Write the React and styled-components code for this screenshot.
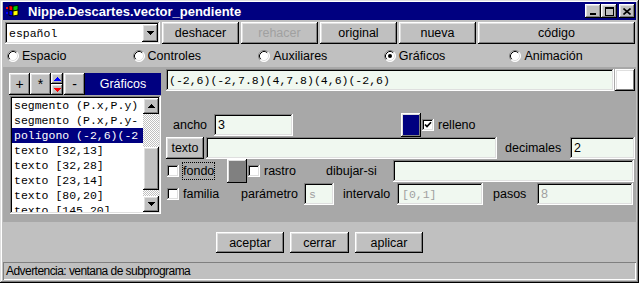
import React from 'react';
import styled, { createGlobalStyle, css } from 'styled-components';

const GlobalStyle = createGlobalStyle`
  html, body { margin: 0; padding: 0; background: #c0c0c0; }
  body { font-family: "Liberation Sans", Arial, sans-serif; font-size: 12.5px; color: #000; }
  * { box-sizing: border-box; }
`;

const raised = css`
  box-shadow: inset -1px -1px #000, inset 1px 1px #fff, inset -2px -2px #808080, inset 2px 2px #dfdfdf;
`;
const sunken = css`
  box-shadow: inset -1px -1px #fff, inset 1px 1px #808080, inset -2px -2px #dfdfdf, inset 2px 2px #000;
`;
const mono = `"Liberation Mono", "Courier New", monospace`;

const Window = styled.div`
  width: 639px;
  height: 283px;
  background: #c0c0c0;
  box-shadow: inset -1px -1px #000, inset 1px 1px #dfdfdf, inset -2px -2px #808080, inset 2px 2px #fff;
  padding: 2px 3px 3px 3px;
  display: flex;
  flex-direction: column;
  overflow: hidden;
`;

const TitleBar = styled.div`
  height: 18px;
  background: #000080;
  display: flex;
  align-items: center;
  padding: 0 1px 0 2px;
`;
const TitleText = styled.span`
  margin-left: 7px;
  color: #fff;
  font-weight: bold;
  font-size: 13px;
  white-space: nowrap;
`;
const TitleButtons = styled.div`
  margin-left: auto;
  display: flex;
  align-items: center;
`;
const TitleButton = styled.div`
  width: 16px;
  height: 14px;
  background: #c0c0c0;
  ${raised};
  display: flex;
  align-items: center;
  justify-content: center;
  margin-left: ${p => p.$gap || 0}px;
`;

const Toolbar = styled.div`
  margin-top: 2px;
  height: 22px;
  display: flex;
  gap: 2px;
  padding: 0 1px 0 2px;
`;
const Combo = styled.div`
  width: 155px;
  background: #fff;
  ${sunken};
  padding: 2px;
  display: flex;
  align-items: center;
`;
const ComboText = styled.span`
  flex: 1;
  padding-left: 2px;
  font-family: ${mono};
  font-size: 11.5px;
`;
const ComboArrow = styled.div`
  width: 16px;
  height: 100%;
  background: #c0c0c0;
  ${raised};
  display: flex;
  align-items: center;
  justify-content: center;
`;
const ToolButton = styled.div`
  ${p => (p.$w ? `width: ${p.$w}px;` : 'flex: 1;')}
  background: #c0c0c0;
  ${raised};
  display: flex;
  align-items: center;
  justify-content: center;
  color: ${p => (p.$disabled ? '#a0a0a0' : '#000')};
`;

const RadioRow = styled.div`
  height: 23px;
  display: grid;
  grid-template-columns: repeat(5, 1fr);
  align-items: center;
  padding: 0 1px 0 4px;
`;
const RadioItem = styled.label`
  display: flex;
  align-items: center;
  gap: 3px;
  white-space: nowrap;
`;

const MainPanel = styled.div`
  height: 155px;
  background: #a8a8a8;
  display: flex;
  align-items: flex-start;
`;
const LeftPanel = styled.div`
  margin-left: 6px;
  width: 152px;
  padding-top: 6px;
  display: flex;
  flex-direction: column;
`;
const ListToolbar = styled.div`
  height: 22px;
  display: flex;
`;
const SmallButton = styled.div`
  width: 21px;
  margin-left: ${p => p.$ml || 0}px;
  background: #c0c0c0;
  ${raised};
  display: flex;
  align-items: center;
  justify-content: center;
  font-size: 14px;
`;
const ArrowStack = styled.div`
  width: 12px;
  display: flex;
  flex-direction: column;
`;
const ArrowHalf = styled.div`
  flex: 1;
  background: #c0c0c0;
  ${raised};
  display: flex;
  align-items: center;
  justify-content: center;
`;
const PanelTitle = styled.div`
  flex: 1;
  background: #000080;
  color: #fff;
  display: flex;
  align-items: center;
  justify-content: center;
`;
const ListBox = styled.div`
  margin: 1px 0 0 1px;
  width: 151px;
  height: 118px;
  background: #fff;
  ${sunken};
  padding: 2px;
  display: flex;
`;
const ListItems = styled.div`
  flex: 1;
  overflow: hidden;
`;
const ListItem = styled.div`
  height: 15px;
  line-height: 15px;
  padding-left: 2px;
  font-family: ${mono};
  font-size: 11.5px;
  white-space: nowrap;
  overflow: hidden;
  background: ${p => (p.$selected ? '#000080' : 'transparent')};
  color: ${p => (p.$selected ? '#fff' : '#000')};
`;
const ScrollBar = styled.div`
  width: 16px;
  display: flex;
  flex-direction: column;
`;
const ScrollButton = styled.div`
  height: 16px;
  background: #c0c0c0;
  ${raised};
  display: flex;
  align-items: center;
  justify-content: center;
`;
const ScrollTrack = styled.div`
  flex: 1;
  padding-top: 33px;
  background: repeating-conic-gradient(#c0c0c0 0 25%, #fff 0 50%) 0 0 / 2px 2px;
`;
const ScrollThumb = styled.div`
  height: 43px;
  background: #c0c0c0;
  ${raised};
`;

const RightPanel = styled.div`
  margin-left: 5px;
  width: 469px;
  padding-top: 2px;
  display: flex;
  flex-direction: column;
`;
const PointsRow = styled.div`
  height: 22px;
  display: flex;
  gap: 1px;
`;
const PointsField = styled.div`
  width: 448px;
  background: #f0f8f0;
  ${sunken};
  display: flex;
  align-items: center;
  padding-left: 3px;
  font-family: ${mono};
  font-size: 11.5px;
  white-space: nowrap;
`;
const ColorButton = styled.div`
  width: ${p => p.$w}px;
  height: ${p => p.$h}px;
  margin-left: ${p => p.$ml || 0}px;
  background: ${p => p.$color};
  ${raised};
  flex: none;
`;
const FieldRow = styled.div`
  height: ${p => p.$h}px;
  margin-top: ${p => p.$mt || 0}px;
  display: flex;
  align-items: center;
`;
const Label = styled.span`
  width: ${p => (p.$w ? `${p.$w}px` : 'auto')};
  margin-left: ${p => p.$ml || 0}px;
  white-space: nowrap;
  flex: none;
`;
const FocusLabel = styled.span`
  width: ${p => p.$w}px;
  height: 18px;
  margin-left: ${p => p.$ml || 0}px;
  border: 1px dotted #000;
  display: flex;
  align-items: center;
  padding-left: 0;
  flex: none;
`;
const TextField = styled.div`
  width: ${p => p.$w}px;
  height: 22px;
  margin-left: ${p => p.$ml || 0}px;
  background: #f0f8f0;
  ${sunken};
  display: flex;
  align-items: center;
  padding-left: ${p => (p.$mono ? 5 : 4)}px;
  flex: none;
  font-family: ${p => (p.$mono ? mono : 'inherit')};
  font-size: ${p => (p.$mono ? '11.5px' : 'inherit')};
  color: ${p => (p.$disabled ? '#a0a0a0' : '#000')};
  white-space: nowrap;
`;
const CheckBoxBox = styled.div`
  width: 12px;
  height: 12px;
  margin-left: ${p => p.$ml || 0}px;
  background: #fff;
  ${sunken};
  display: flex;
  align-items: center;
  justify-content: center;
  flex: none;
`;
const PushButton = styled.div`
  width: ${p => p.$w}px;
  height: 22px;
  background: #c0c0c0;
  ${raised};
  display: flex;
  align-items: center;
  justify-content: center;
  flex: none;
`;

const ButtonBar = styled.div`
  height: 36px;
  padding-top: 10px;
  display: flex;
  justify-content: center;
  align-items: flex-start;
  gap: 6px;
`;
const DialogButton = styled.div`
  width: ${p => p.$w}px;
  height: 21px;
  background: #c0c0c0;
  ${raised};
  display: flex;
  align-items: center;
  justify-content: center;
`;
const StatusBar = styled.div`
  margin-top: 4px;
  height: 18px;
  box-shadow: inset 1px 1px #808080, inset -1px -1px #fff;
  display: flex;
  align-items: center;
  padding-left: 3px;
  font-size: 12px;
  letter-spacing: -0.55px;
  white-space: nowrap;
`;

const Tri = ({ dir = 'down', color = '#000', w = 7, h = 4 }) => (
  <svg width={w} height={h} viewBox={`0 0 ${w} ${h}`} shapeRendering="crispEdges">
    <polygon
      points={dir === 'down' ? `0,0 ${w},0 ${w / 2},${h}` : `0,${h} ${w},${h} ${w / 2},0`}
      fill={color}
    />
  </svg>
);

const AppIcon = () => (
  <svg width="16" height="16" viewBox="0 0 16 16">
    <rect x="1" y="4" width="2" height="2" fill="#f00" />
    <rect x="1" y="9" width="2" height="2" fill="#00f" />
    <path d="M4 2.5 L8 3.2 L8 8 L4 7.3 Z" fill="#f00" stroke="#000" strokeWidth="0.9" />
    <path d="M8 3.2 L13 2.3 L13 7.1 L8 8 Z" fill="#0c0" stroke="#000" strokeWidth="0.9" />
    <path d="M4 7.3 L8 8 L8 13 L4 12.3 Z" fill="#00f" stroke="#000" strokeWidth="0.9" />
    <path d="M8 8 L13 7.1 L13 12.1 L8 13 Z" fill="#ff0" stroke="#000" strokeWidth="0.9" />
  </svg>
);

const MinGlyph = () => (
  <svg width="8" height="9" viewBox="0 0 8 9" shapeRendering="crispEdges">
    <rect x="1" y="6" width="6" height="2" fill="#000" />
  </svg>
);
const MaxGlyph = () => (
  <svg width="9" height="9" viewBox="0 0 9 9" shapeRendering="crispEdges">
    <rect x="0" y="0" width="9" height="2" fill="#000" />
    <rect x="0" y="0" width="1" height="9" fill="#000" />
    <rect x="8" y="0" width="1" height="9" fill="#000" />
    <rect x="0" y="8" width="9" height="1" fill="#000" />
  </svg>
);
const CloseGlyph = () => (
  <svg width="8" height="7" viewBox="0 0 8 7">
    <path d="M0.5 0.5 L7.5 6.5 M7.5 0.5 L0.5 6.5" stroke="#000" strokeWidth="1.6" />
  </svg>
);

const Radio = ({ checked }) => (
  <svg width="12" height="12" viewBox="0 0 12 12" style={{ flex: 'none' }}>
    <circle cx="6" cy="6" r="5.5" fill="#fff" />
    <path d="M2.11 9.89 A5.5 5.5 0 0 1 9.89 2.11" fill="none" stroke="#808080" strokeWidth="1" />
    <path d="M2.82 9.18 A4.5 4.5 0 0 1 9.18 2.82" fill="none" stroke="#000" strokeWidth="1" />
    <path d="M9.89 2.11 A5.5 5.5 0 0 1 2.11 9.89" fill="none" stroke="#fff" strokeWidth="1" />
    <path d="M9.18 2.82 A4.5 4.5 0 0 1 2.82 9.18" fill="none" stroke="#dfdfdf" strokeWidth="1" />
    {checked && <circle cx="6" cy="6" r="2" fill="#000" />}
  </svg>
);

const CheckBox = ({ checked, ml }) => (
  <CheckBoxBox $ml={ml}>
    {checked && (
      <svg width="8" height="8" viewBox="0 0 8 8">
        <path d="M1 3.5 L3 5.6 L7 1.2" fill="none" stroke="#000" strokeWidth="1.7" />
      </svg>
    )}
  </CheckBoxBox>
);

const radios = [
  { label: 'Espacio' },
  { label: 'Controles' },
  { label: 'Auxiliares' },
  { label: 'Gráficos', checked: true },
  { label: 'Animación' },
];

const items = [
  'segmento (P.x,P.y)',
  'segmento (P.x,P.y-',
  'polígono (-2,6)(-2',
  'texto [32,13]',
  'texto [32,28]',
  'texto [23,14]',
  'texto [80,20]',
  'texto [145,20]',
];

export default function App() {
  return (
    <>
      <GlobalStyle />
      <Window>
        <TitleBar>
          <AppIcon />
          <TitleText>Nippe.Descartes.vector_pendiente</TitleText>
          <TitleButtons>
            <TitleButton><MinGlyph /></TitleButton>
            <TitleButton><MaxGlyph /></TitleButton>
            <TitleButton $gap={2}><CloseGlyph /></TitleButton>
          </TitleButtons>
        </TitleBar>

        <Toolbar>
          <Combo>
            <ComboText>español</ComboText>
            <ComboArrow><Tri dir="down" /></ComboArrow>
          </Combo>
          <ToolButton $w={77}>deshacer</ToolButton>
          <ToolButton $w={77} $disabled>rehacer</ToolButton>
          <ToolButton $w={77}>original</ToolButton>
          <ToolButton $w={77}>nueva</ToolButton>
          <ToolButton>código</ToolButton>
        </Toolbar>

        <RadioRow>
          {radios.map(r => (
            <RadioItem key={r.label}>
              <Radio checked={r.checked} />
              {r.label}
            </RadioItem>
          ))}
        </RadioRow>

        <MainPanel>
          <LeftPanel>
            <ListToolbar>
              <SmallButton>+</SmallButton>
              <SmallButton>*</SmallButton>
              <ArrowStack>
                <ArrowHalf><Tri dir="up" color="#0000ff" w={7} h={4} /></ArrowHalf>
                <ArrowHalf><Tri dir="down" color="#ff0000" w={7} h={4} /></ArrowHalf>
              </ArrowStack>
              <SmallButton $ml={1}>-</SmallButton>
              <PanelTitle>Gráficos</PanelTitle>
            </ListToolbar>
            <ListBox>
              <ListItems>
                {items.map((t, i) => (
                  <ListItem key={i} $selected={i === 2}>{t}</ListItem>
                ))}
              </ListItems>
              <ScrollBar>
                <ScrollButton><Tri dir="up" /></ScrollButton>
                <ScrollTrack><ScrollThumb /></ScrollTrack>
                <ScrollButton><Tri dir="down" /></ScrollButton>
              </ScrollBar>
            </ListBox>
          </LeftPanel>

          <RightPanel>
            <PointsRow>
              <PointsField>(-2,6)(-2,7.8)(4,7.8)(4,6)(-2,6)</PointsField>
              <ColorButton $color="#fff" $w={20} $h={22} />
            </PointsRow>

            <FieldRow $h={24} $mt={22}>
              <Label $ml={7} $w={41}>ancho</Label>
              <TextField $w={79}>3</TextField>
              <ColorButton $color="#000080" $w={20} $h={24} $ml={108} />
              <CheckBox checked ml={1} />
              <Label $ml={4}>relleno</Label>
            </FieldRow>

            <FieldRow $h={22}>
              <PushButton $w={38}>texto</PushButton>
              <TextField $w={291} $ml={2} />
              <Label $ml={8} $w={65}>decimales</Label>
              <TextField $w={65}>2</TextField>
            </FieldRow>

            <FieldRow $h={24}>
              <CheckBox ml={1} />
              <FocusLabel $ml={3} $w={33}>fondo</FocusLabel>
              <ColorButton $color="#808080" $w={20} $h={24} $ml={12} />
              <CheckBox ml={1} />
              <Label $ml={4} $w={62}>rastro</Label>
              <Label $w={67}>dibujar-si</Label>
              <TextField $w={241} />
            </FieldRow>

            <FieldRow $h={22}>
              <CheckBox ml={1} />
              <Label $ml={4} $w={58}>familia</Label>
              <Label $w={63}>parámetro</Label>
              <TextField $w={30} $mono $disabled>s</TextField>
              <Label $ml={9} $w={54}>intervalo</Label>
              <TextField $w={86} $mono $disabled>[0,1]</TextField>
              <Label $ml={10} $w={44}>pasos</Label>
              <TextField $w={96} $disabled>8</TextField>
            </FieldRow>
          </RightPanel>
        </MainPanel>

        <ButtonBar>
          <DialogButton $w={68}>aceptar</DialogButton>
          <DialogButton $w={59}>cerrar</DialogButton>
          <DialogButton $w={68}>aplicar</DialogButton>
        </ButtonBar>

        <StatusBar>Advertencia: ventana de subprograma</StatusBar>
      </Window>
    </>
  );
}
